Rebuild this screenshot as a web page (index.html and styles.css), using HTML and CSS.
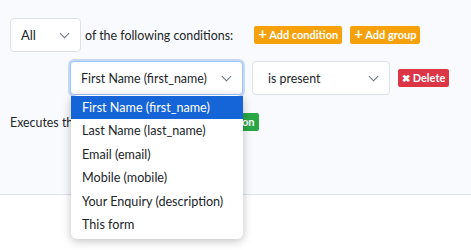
FILE: index.html
```html
<!DOCTYPE html>
<html lang="en">
<head>
    <meta charset="UTF-8">
    <meta name="viewport" content="width=device-width, initial-scale=1.0">
    <title>Conditions</title>
    <link rel="stylesheet" href="styles.css">
</head>
<body>
    <div class="panel">
        <div class="row">
            <div class="select select-all">All <span class="chev"></span></div>
            <span class="label">of the following conditions:</span>
            <button class="btn btn-orange first"><b>+</b> Add condition</button>
            <button class="btn btn-orange"><b>+</b> Add group</button>
        </div>

        <div class="row cond">
            <div class="field-wrap">
                <div class="select select-field focus">First Name (first_name) <span class="chev"></span></div>
                <ul class="menu">
                    <li class="active">First Name (first_name)</li>
                    <li>Last Name (last_name)</li>
                    <li>Email (email)</li>
                    <li>Mobile (mobile)</li>
                    <li>Your Enquiry (description)</li>
                    <li>This form</li>
                </ul>
            </div>
            <div class="select select-op">is present <span class="chev"></span></div>
            <button class="btn btn-red"><b>&#10006;</b> Delete</button>
        </div>

        <div class="row actions">
            <span class="label">Executes the following actions:</span>
            <button class="btn btn-green"><b>+</b> Add action</button>
        </div>
    </div>
</body>
</html>
```

FILE: styles.css
```css
html, body {
    min-height: 100vh;
}
body {
    margin: 0;
    font-family: "Segoe UI", Lato, "Noto Sans", sans-serif;
    font-size: 12.4px;
    color: #212529;
    background: #fff;
}
.panel {
    background: #f9fafd;
    border-bottom: 1px solid #dee2e6;
    padding: 18px 10px 0;
    height: 176px;
}
.row {
    display: flex;
    align-items: center;
    white-space: nowrap;
}
.row > * {
    flex-shrink: 0;
}
.select {
    box-sizing: border-box;
    display: flex;
    align-items: center;
    justify-content: space-between;
    height: 34px;
    padding: 0 12px 0 10px;
    background: #fff;
    border: 1px solid #dee2e6;
    border-radius: 4px;
}
.chev {
    width: 6px;
    height: 6px;
    border-right: 1.3px solid #6c757d;
    border-bottom: 1.3px solid #6c757d;
    transform: rotate(45deg);
    margin-top: -4px;
}
.select-all {
    width: 71px;
    font-size: 13px;
}
.label {
    margin-left: 4px;
}
.btn {
    border: none;
    color: #fff;
    font-family: inherit;
    font-size: 11px;
    font-weight: 700;
    height: 18px;
    padding: 0 5px;
    border-radius: 2px;
    line-height: 18px;
    cursor: pointer;
}
.btn b {
    font-size: 15px;
    font-weight: 700;
    line-height: 1;
}
.btn-orange {
    background: #f6a10b;
    margin-left: 8px;
    padding: 0 4px;
}
.btn-orange.first {
    margin-left: 21px;
}
.btn-red {
    background: #dc3545;
    margin-left: 8px;
    padding: 0 4px;
}
.btn-red b {
    font-size: 10px;
}
.btn-green {
    background: #28a745;
    margin-left: 7px;
}
.cond {
    margin-top: 9px;
    padding-left: 60px;
}
.field-wrap {
    position: relative;
}
.select-field {
    width: 173px;
}
.focus {
    border-color: #9ec5fe;
    box-shadow: 0 0 0 2px #c6d9f3;
}
.select-op {
    width: 138px;
    margin-left: 9px;
    padding-left: 15px;
}
.menu {
    position: absolute;
    top: 34px;
    left: 1px;
    width: 172px;
    margin: 0;
    padding: 1px 0 3px;
    list-style: none;
    background: #fff;
    border-radius: 6px;
    box-shadow: 0 2px 10px rgba(0, 0, 0, 0.25);
    z-index: 2;
    font-size: 12.6px;
}
.menu li {
    height: 23.4px;
    line-height: 23.4px;
    padding-left: 11px;
}
.menu li.active {
    background: #1565d8;
    color: #fff;
}
.actions {
    margin-top: 18px;
}
.actions .label {
    margin-left: 0;
}
```
